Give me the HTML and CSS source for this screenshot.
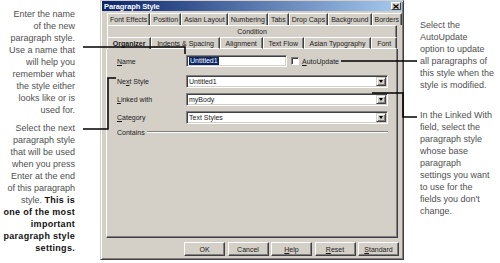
FILE: index.html
```html
<!DOCTYPE html>
<html>
<head>
<meta charset="utf-8">
<link rel="stylesheet" href="styles.css">
</head>
<body>
<div class="page">
  <div class="notes notes-left">
    <p class="note">Enter the name<br>of the new<br>paragraph style.<br>Use a name that<br>will help you<br>remember what<br>the style either<br>looks like or is<br>used for.</p>
    <p class="note second">Select the next<br>paragraph style<br>that will be used<br>when you press<br>Enter at the end<br>of this paragraph<br>style. <b>This is</b><br><b>one of the most</b><br><b>important</b><br><b>paragraph style</b><br><b>settings.</b></p>
  </div>

  <div class="dialog">
    <div class="titlebar">
      <span class="title">Paragraph Style</span>
      <span class="close"><svg width="6" height="5" viewBox="0 0 6 5"><path d="M0.5 0.5 L5.5 4.5 M5.5 0.5 L0.5 4.5" stroke="#000" stroke-width="1.2"/></svg></span>
    </div>
    <div class="body">
      <div class="tabs">
        <div class="tabrow">
          <span class="tab">Font Effects</span>
          <span class="tab">Position</span>
          <span class="tab">Asian Layout</span>
          <span class="tab">Numbering</span>
          <span class="tab">Tabs</span>
          <span class="tab">Drop Caps</span>
          <span class="tab">Background</span>
          <span class="tab">Borders</span>
        </div>
        <div class="tabrow">
          <span class="tab">Condition</span>
        </div>
        <div class="tabrow front">
          <span class="tab active">Organizer</span>
          <span class="tab">Indents &amp; Spacing</span>
          <span class="tab">Alignment</span>
          <span class="tab">Text Flow</span>
          <span class="tab">Asian Typography</span>
          <span class="tab">Font</span>
        </div>
      </div>

      <div class="panel">
        <div class="field name-row">
          <span class="label"><u>N</u>ame</span>
          <div class="name-controls">
            <span class="input"><span class="sel">Untitled1</span></span>
            <span class="checkbox"></span>
            <span class="cblabel"><u>A</u>utoUpdate</span>
          </div>
        </div>
        <div class="field">
          <span class="label">Ne<u>x</u>t Style</span>
          <span class="select"><span class="val">Untitled1</span><span class="drop"><i></i></span></span>
        </div>
        <div class="field">
          <span class="label"><u>L</u>inked with</span>
          <span class="select"><span class="val">myBody</span><span class="drop"><i></i></span></span>
        </div>
        <div class="field">
          <span class="label"><u>C</u>ategory</span>
          <span class="select"><span class="val">Text Styles</span><span class="drop"><i></i></span></span>
        </div>
        <div class="contains">
          <span class="label">Contains</span>
          <span class="rule"></span>
        </div>
      </div>

      <div class="buttons">
        <span class="btn">OK</span>
        <span class="btn">Cancel</span>
        <span class="btn"><u>H</u>elp</span>
        <span class="btn"><u>R</u>eset</span>
        <span class="btn"><u>S</u>tandard</span>
      </div>
    </div>
  </div>

  <div class="notes notes-right">
    <p class="note">Select the<br>AutoUpdate<br>option to update<br>all paragraphs of<br>this style when the<br>style is modified.</p>
    <p class="note second">In the Linked With<br>field, select the<br>paragraph style<br>whose base<br>paragraph<br>settings you want<br>to use for the<br>fields you don't<br>change.</p>
  </div>

  <svg class="callouts" width="500" height="263" viewBox="0 0 500 263">
    <polyline points="83,47 185,47 185,54"/>
    <polyline points="83,129 108,129 108,78 116,78"/>
    <polyline points="341,61 417,61"/>
    <polyline points="372,93 403,93 403,117 417,117"/>
  </svg>
</div>
</body>
</html>
```

FILE: styles.css
```css
* { box-sizing: border-box; margin: 0; padding: 0; }

html, body {
  width: 500px;
  height: 263px;
  background: #fff;
  overflow: hidden;
}

body {
  font-family: "Liberation Sans", Arial, sans-serif;
}

.page {
  position: relative;
  display: flex;
  width: 500px;
  height: 263px;
}

/* annotation text */
.notes {
  font-size: 9px;
  line-height: 12px;
  color: #505050;
}

.notes b {
  color: #111;
  letter-spacing: 0.3px;
}

.notes-left {
  width: 75px;
  text-align: right;
  padding-top: 8px;
}

.notes-left .second { margin-top: 6px; }

.notes-right {
  margin-left: 16px;
  width: 80px;
  padding-top: 19px;
  white-space: nowrap;
}

.notes-right .second { margin-top: 18px; }

/* dialog window */
.dialog {
  margin-left: 25px;
  width: 304px;
  height: 260px;
  background: #d4d0c8;
  border: 1px solid;
  border-color: #d4d0c8 #404040 #404040 #d4d0c8;
  box-shadow: inset 1px 1px 0 #fff, inset -1px -1px 0 #808080;
  padding: 0 1px 1px 1px;
  display: flex;
  flex-direction: column;
  font-size: 7px;
  color: #1a1a1a;
}

.titlebar {
  height: 10px;
  background: linear-gradient(to right, #0a246a, #a6caf0);
  display: flex;
  align-items: center;
  justify-content: space-between;
  padding: 0 1px 0 2px;
}

.title {
  color: #fff;
  font-weight: bold;
  font-size: 7.5px;
  letter-spacing: -0.1px;
}

.close {
  width: 10px;
  height: 8px;
  background: #d4d0c8;
  border: 1px solid;
  border-color: #fff #404040 #404040 #fff;
  display: flex;
  align-items: center;
  justify-content: center;
}

.body {
  padding: 2px 4px 0 4px;
  display: flex;
  flex-direction: column;
}

.tabs {
  margin: 0 1px;
}

.tabrow {
  display: flex;
  height: 12px;
}

.tab {
  flex: 1 1 auto;
  text-align: center;
  white-space: nowrap;
  line-height: 11px;
  padding: 0 2px;
  border-top: 1px solid #fff;
  border-left: 1px solid #fff;
  border-right: 1px solid #404040;
  box-shadow: inset -1px 0 0 #808080;
}

.front .tab {
  border-bottom: 1px solid #fff;
}

.front .tab.active {
  border-bottom: none;
  font-weight: bold;
}

.panel {
  height: 189px;
  border: 1px solid;
  border-top: none;
  border-color: #fff #404040 #404040 #fff;
  box-shadow: inset -1px -1px 0 #808080;
  padding: 6px 9px 0 10px;
  display: flex;
  flex-direction: column;
}

.field {
  display: grid;
  grid-template-columns: 69px 1fr;
  align-items: center;
  height: 13px;
  margin-bottom: 5px;
}

.name-row {
  height: 12px;
  margin-bottom: 8px;
}

.label {
  white-space: nowrap;
}

.name-controls {
  display: flex;
  align-items: center;
}

.input, .select {
  background: #fff;
  border: 1px solid;
  border-color: #808080 #fff #fff #808080;
  box-shadow: inset 1px 1px 0 #404040, inset -1px -1px 0 #d4d0c8;
  display: flex;
  align-items: center;
}

.input {
  width: 101px;
  height: 12px;
  padding-left: 2px;
}

.sel {
  background: #0a246a;
  color: #fff;
  line-height: 8px;
  padding: 0 1px;
}

.checkbox {
  width: 8px;
  height: 8px;
  margin-left: 4px;
  background: #fff;
  border: 1px solid;
  border-color: #808080 #fff #fff #808080;
  box-shadow: inset 1px 1px 0 #404040;
}

.cblabel {
  margin-left: 3px;
}

.select {
  height: 13px;
  justify-content: space-between;
  padding: 1px 1px 1px 2px;
}

.drop {
  width: 10px;
  height: 9px;
  background: #d4d0c8;
  border: 1px solid;
  border-color: #d4d0c8 #404040 #404040 #d4d0c8;
  box-shadow: inset 1px 1px 0 #fff, inset -1px -1px 0 #808080;
  display: flex;
  align-items: center;
  justify-content: center;
}

.drop i {
  width: 0;
  height: 0;
  border-left: 2.5px solid transparent;
  border-right: 2.5px solid transparent;
  border-top: 3px solid #000;
}

.contains {
  margin-top: -2px;
  height: 10px;
  display: flex;
  align-items: center;
}

.rule {
  flex: 1;
  margin-left: 2px;
  border-top: 1px solid #808080;
  border-bottom: 1px solid #fff;
}

.buttons {
  margin-top: 4px;
  margin-right: -1px;
  display: flex;
  justify-content: flex-end;
  gap: 2.5px;
}

.btn {
  width: 41px;
  height: 14px;
  display: flex;
  align-items: center;
  justify-content: center;
  border: 1px solid;
  border-color: #fff #404040 #404040 #fff;
  box-shadow: inset -1px -1px 0 #808080;
}

/* callout leader lines */
.callouts {
  position: absolute;
  left: 0;
  top: 0;
  pointer-events: none;
}

.callouts polyline {
  fill: none;
  stroke: #000;
  stroke-width: 1.5;
}
```
